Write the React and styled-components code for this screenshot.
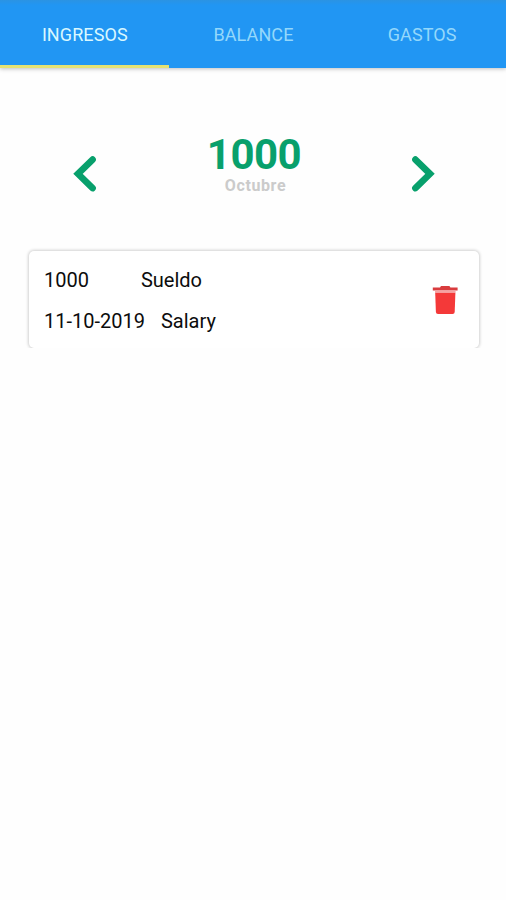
import styled, { createGlobalStyle } from "styled-components";

const tabs = ["Ingresos", "Balance", "Gastos"];

const items = [
  { amount: "1000", category: "Sueldo", date: "11-10-2019", note: "Salary" },
];

export default function App() {
  return (
    <>
      <GlobalStyle />
      <TabBar>
        {tabs.map((tab, i) => (
          <Tab key={tab} $active={i === 0}>
            {tab}
          </Tab>
        ))}
      </TabBar>

      <Month>
        <Arrow aria-label="Anterior">
          <Chevron viewBox="0 0 24 38">
            <path d="M19.6 4.6 5 18.8l14.600 14.300" />
          </Chevron>
        </Arrow>
        <Summary>
          <Total>1000</Total>
          <MonthName>Octubre</MonthName>
        </Summary>
        <Arrow aria-label="Siguiente">
          <Chevron viewBox="0 0 24 38">
            <path d="M4.4 4.6 19 18.8 4.400 33.100" />
          </Chevron>
        </Arrow>
      </Month>

      <List>
        {items.map((item) => (
          <Card key={item.date}>
            <Details>
              <Row $gap="52px">
                <span>{item.amount}</span>
                <span>{item.category}</span>
              </Row>
              <Row $gap="16px">
                <span>{item.date}</span>
                <span>{item.note}</span>
              </Row>
            </Details>
            <Delete aria-label="Eliminar">
              <Trash viewBox="0 0 26 30">
                <path fill="#d93c3e" d="M9 1h8.400l1 1.500h7.200v3H.8v-3H8z" />
                <path fill="#f5a3a3" d="M3 5.500h20.600v2.200H3z" />
                <path
                  fill="#f43939"
                  d="M3.200 7.700h20.200l-.7 19.300q-.1 2-2.100 2H6q-2 0-2.100-2z"
                />
              </Trash>
            </Delete>
          </Card>
        ))}
      </List>
    </>
  );
}

const GlobalStyle = createGlobalStyle`
  * {
    box-sizing: border-box;
  }
  body {
    margin: 0;
    background: #fefefe;
    font-family: Roboto, sans-serif;
  }
  button {
    padding: 0;
    border: none;
    background: none;
    font: inherit;
    cursor: pointer;
  }
`;

const TabBar = styled.nav`
  display: grid;
  grid-template-columns: repeat(3, 1fr);
  height: 68px;
  background: linear-gradient(#2b93e3, #2196f3 5px);
  box-shadow: 0 1px 4px rgba(0, 0, 0, 0.25);
`;

const Tab = styled.button`
  && {
    padding: 3px 0 0 1px;
    border-bottom: 3px solid ${(p) => (p.$active ? "#e6e272" : "transparent")};
  }
  color: ${(p) => (p.$active ? "#d9f8ff" : "#94d8fb")};
  font-size: 18px;
  letter-spacing: 0.1px;
  text-transform: uppercase;
`;

const Month = styled.section`
  display: flex;
  justify-content: space-between;
  padding: 66px 71px 0 73px;
`;

const Arrow = styled.button`
  align-self: flex-start;
  height: 38px;
  margin-top: 21px;
`;

const Chevron = styled.svg`
  display: block;
  width: 24px;
  height: 38px;
  fill: none;
  stroke: #08a06c;
  stroke-width: 6.6;
  stroke-linecap: round;
  stroke-linejoin: miter;
`;

const Summary = styled.div`
  display: flex;
  flex-direction: column;
  align-items: center;
`;

const Total = styled.strong`
  color: #08a06c;
  font-size: 42px;
  font-weight: 700;
  line-height: 42px;
  letter-spacing: -0.5px;
`;

const MonthName = styled.span`
  padding-left: 3px;
  color: #cbcbcb;
  font-size: 16px;
  font-weight: 700;
  line-height: 20px;
  letter-spacing: 0.6px;
`;

const List = styled.main`
  padding: 55px 27px 0 29px;
`;

const Card = styled.article`
  display: flex;
  justify-content: space-between;
  align-items: center;
  height: 97px;
  padding: 0 21px 0 15px;
  border-radius: 5px;
  background: #fff;
  box-shadow: 0 0 3px 1px rgba(0, 0, 0, 0.18);
`;

const Details = styled.div`
  display: flex;
  flex-direction: column;
  gap: 17px;
  padding-top: 2px;
`;

const Row = styled.div`
  display: flex;
  gap: ${(p) => p.$gap};
  color: #0c0c0c;
  font-size: 20px;
  line-height: 24px;
`;

const Delete = styled.button`
  height: 30px;
`;

const Trash = styled.svg`
  display: block;
  width: 26px;
  height: 30px;
`;
